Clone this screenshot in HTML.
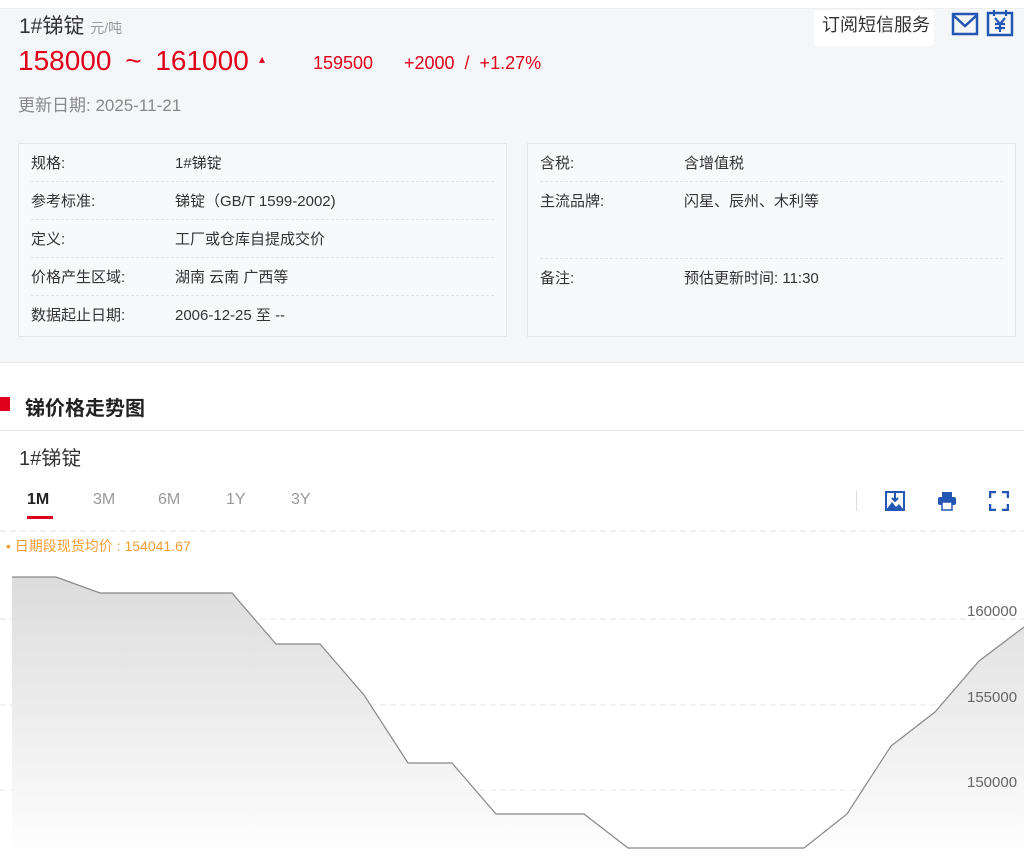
<!DOCTYPE html>
<html><head><meta charset="utf-8"><style>
*{margin:0;padding:0;box-sizing:border-box}
body{width:1024px;height:859px;overflow:hidden;background:#fff;font-family:"Liberation Sans","Noto Sans CJK SC",sans-serif;position:relative;color:#333}
.top{position:absolute;left:0;top:8px;width:1024px;height:355px;background:#f5f6f8;border-top:1px solid #eee;border-bottom:1px solid #e8e8e8}
.a{position:absolute;white-space:nowrap}
.box{position:absolute;top:143px;height:194px;background:#f8f9fb;border:1px solid #e3e5e8}
.row{position:absolute;left:12px;right:12px;font-size:15px;color:#333;border-bottom:1px dashed #e3e3e3;height:38px;line-height:40px}
.row span{position:absolute;left:144px}
</style></head><body>
<div class="top"></div>
<div class="a" style="left:19px;top:10px;font-size:21px;color:#333">1#锑锭 <span style="font-size:14px;color:#999">元/吨</span></div>
<div class="a" style="left:18px;top:45px;font-size:28px;color:#e0001b;word-spacing:6px">158000 ~ 161000</div>
<div class="a" style="left:259px;top:52px;font-size:12px;color:#e0001b">▴</div>
<div class="a" style="left:313px;top:53px;font-size:18px;color:#e0001b">159500</div>
<div class="a" style="left:404px;top:53px;font-size:18px;color:#e0001b;word-spacing:5px">+2000 / +1.27%</div>
<div class="a" style="left:18px;top:91px;font-size:17px;color:#888">更新日期: 2025-11-21</div>
<div class="a" style="left:814px;top:10px;width:120px;height:36px;background:#fff;border-radius:3px;font-size:18px;line-height:30px;padding-left:8px;color:#333">订阅短信服务</div>
<svg class="a" style="left:951px;top:11px" width="28" height="26" viewBox="0 0 28 26"><rect x="2" y="3" width="24" height="20" fill="none" stroke="#2456b4" stroke-width="2.5"/><path d="M2 4L14 15L26 4" fill="none" stroke="#2456b4" stroke-width="2.5"/></svg>
<svg class="a" style="left:986px;top:9px" width="28" height="28" viewBox="0 0 28 28"><rect x="2" y="4" width="24" height="22" fill="none" stroke="#2456b4" stroke-width="2.5"/><path d="M8 1v6M20 1v6M9 9l5 6 5-6M14 15v8M9 15h10M9 19h10" fill="none" stroke="#2456b4" stroke-width="2.2"/></svg>
<div class="box" style="left:18px;width:489px">
<div class="row" style="top:0">规格:<span>1#锑锭</span></div>
<div class="row" style="top:38px">参考标准:<span>锑锭（GB/T 1599-2002)</span></div>
<div class="row" style="top:76px">定义:<span>工厂或仓库自提成交价</span></div>
<div class="row" style="top:114px">价格产生区域:<span>湖南 云南 广西等</span></div>
<div class="row" style="top:152px;border:0">数据起止日期:<span>2006-12-25 至 --</span></div>
</div>
<div class="box" style="left:527px;width:489px">
<div class="row" style="top:0">含税:<span>含增值税</span></div>
<div class="row" style="top:38px;height:77px">主流品牌:<span>闪星、辰州、木利等</span></div>
<div class="row" style="top:115px;border:0">备注:<span>预估更新时间: 11:30</span></div>
</div>
<div class="a" style="left:0;top:397px;width:10px;height:14px;background:#e0001b"></div>
<div class="a" style="left:25px;top:392px;font-size:20px;font-weight:bold;color:#222">锑价格走势图</div>
<div class="a" style="left:0;top:430px;width:1024px;height:1px;background:#e5e5e5"></div>
<div class="a" style="left:19px;top:442px;font-size:20px;color:#333">1#锑锭</div>
<div class="a" style="left:27px;top:491px;font-size:16px;font-weight:bold;color:#222">1M</div>
<div class="a" style="left:27px;top:516px;width:26px;height:3px;background:#e0001b"></div>
<div class="a" style="left:93px;top:491px;font-size:16px;color:#999">3M</div>
<div class="a" style="left:158px;top:491px;font-size:16px;color:#999">6M</div>
<div class="a" style="left:226px;top:491px;font-size:16px;color:#999">1Y</div>
<div class="a" style="left:291px;top:491px;font-size:16px;color:#999">3Y</div>
<div class="a" style="left:856px;top:491px;width:1px;height:20px;background:#ddd"></div>
<svg class="a" style="left:885px;top:491px" width="20" height="20" viewBox="0 0 20 20"><rect x="1" y="1" width="18" height="18" fill="none" stroke="#2456b4" stroke-width="2"/><path d="M1 19L7 11l4 5 3-3 5 6z" fill="#2456b4"/><path d="M10 2v8M7 7l3 3 3-3" stroke="#2456b4" stroke-width="2" fill="none"/></svg>
<svg class="a" style="left:937px;top:491px" width="20" height="20" viewBox="0 0 20 20"><rect x="5" y="1" width="10" height="5" fill="#2456b4"/><rect x="1" y="6" width="18" height="8" rx="2" fill="#2456b4"/><rect x="5" y="11" width="10" height="8" fill="#fff" stroke="#2456b4" stroke-width="1.5"/></svg>
<svg class="a" style="left:989px;top:491px" width="20" height="20" viewBox="0 0 20 20"><path d="M1 7V1h6M13 1h6v6M19 13v6h-6M7 19H1v-6" fill="none" stroke="#2456b4" stroke-width="2.5"/></svg>
<div class="a" style="left:6px;top:536px;font-size:14px;color:#f39c34">• 日期段现货均价 : 154041.67</div>
<svg class="a" style="left:0;top:520px" width="1024" height="339" viewBox="0 520 1024 339">
<defs><linearGradient id="g" x1="0" y1="0" x2="0" y2="1"><stop offset="0" stop-color="#dcdcdc"/><stop offset="1" stop-color="#fff"/></linearGradient></defs>
<g stroke="#e6e6e6" stroke-dasharray="6,4"><line x1="0" y1="531" x2="1024" y2="531"/><line x1="0" y1="619" x2="1024" y2="619"/><line x1="0" y1="705" x2="1024" y2="705"/><line x1="0" y1="790" x2="1024" y2="790"/></g>
<path d="M12 577L56 577L100 593L232 593L276 644L320 644L364 695L408 763L452 763L496 814L584 814L628 848L804 848L847 814L891 746L935 712L979 661L1024 627L1024 859L12 859Z" fill="url(#g)"/>
<path d="M12 577L56 577L100 593L232 593L276 644L320 644L364 695L408 763L452 763L496 814L584 814L628 848L804 848L847 814L891 746L935 712L979 661L1024 627" fill="none" stroke="#888" stroke-width="1.2"/>
<g font-family="Liberation Sans" font-size="15" fill="#666"><text x="967" y="616">160000</text><text x="967" y="702">155000</text><text x="967" y="787">150000</text></g>
</svg>
</body></html>
